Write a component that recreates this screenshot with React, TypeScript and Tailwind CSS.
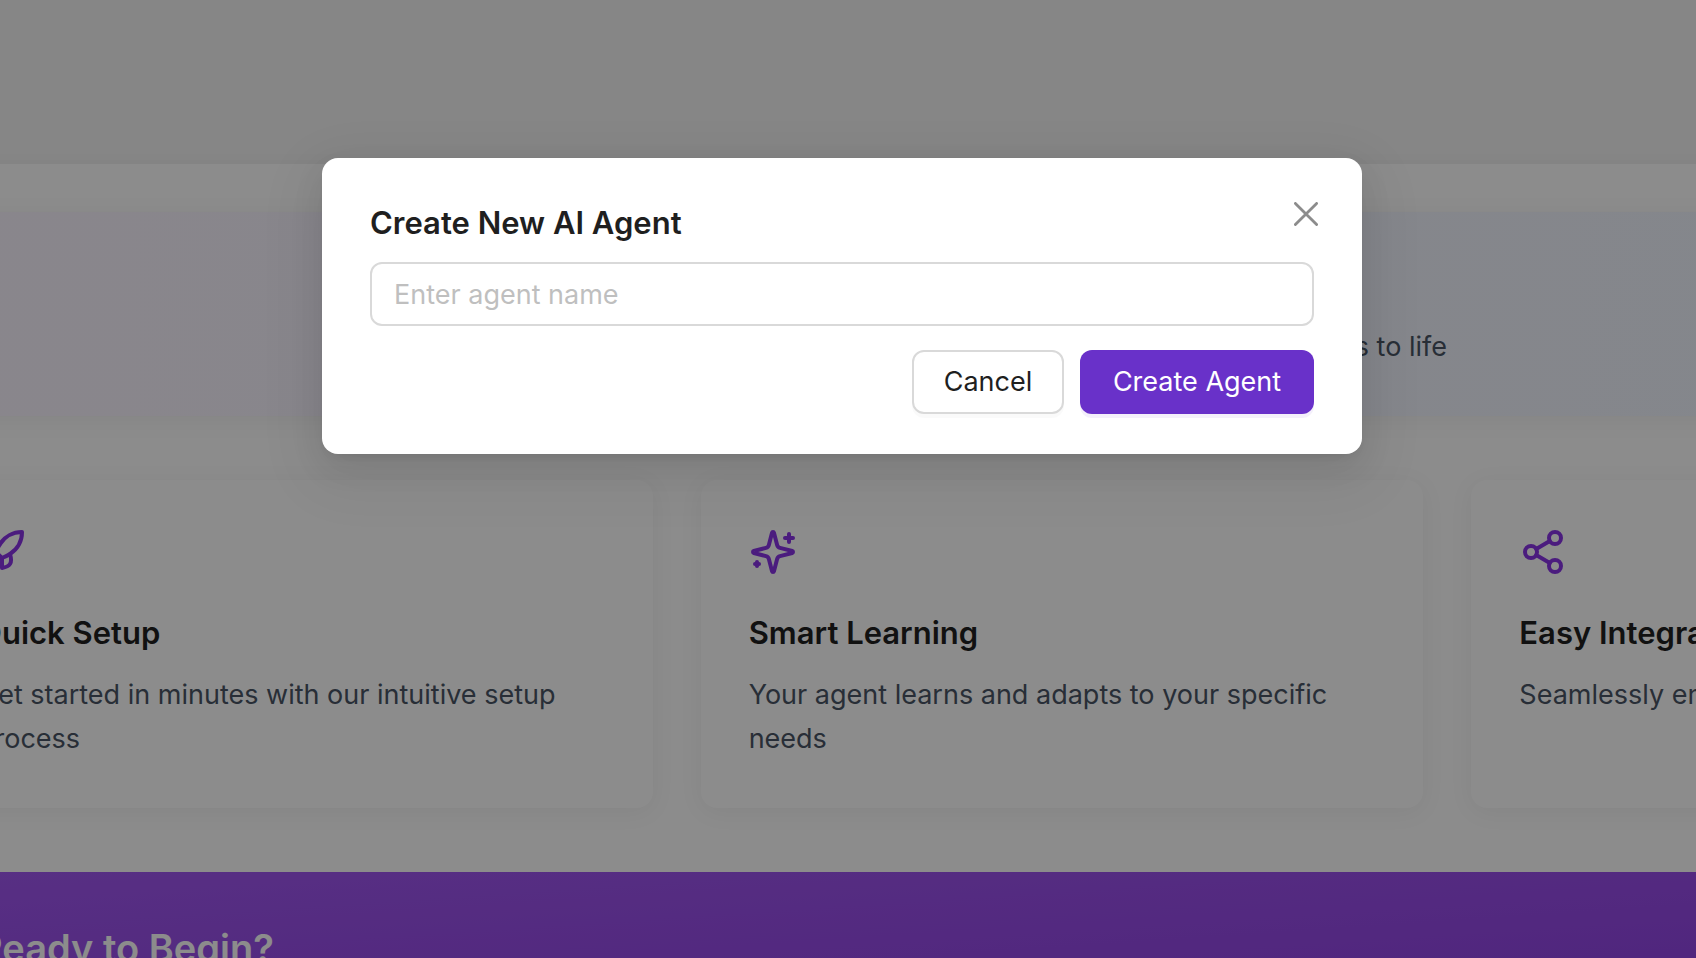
import type { ComponentType } from "react";
import { Rocket, Share2 } from "lucide-react";

type IconProps = {
  className?: string;
};

type Feature = {
  icon: ComponentType<IconProps>;
  title: string;
  text: string;
};

function SparklesIcon({ className }: IconProps) {
  return (
    <svg
      viewBox="0 0 24 24"
      className={className}
      fill="none"
      stroke="currentColor"
      strokeWidth="2"
      strokeLinecap="round"
      strokeLinejoin="round"
      aria-hidden="true"
    >
      <path d="M9.937 15.5A2 2 0 0 0 8.5 14.063l-6.135-1.582a.5.5 0 0 1 0-.962L8.5 9.936A2 2 0 0 0 9.937 8.5l1.582-6.135a.5.5 0 0 1 .963 0L14.063 8.5A2 2 0 0 0 15.5 9.937l6.135 1.581a.5.5 0 0 1 0 .964L15.5 14.063a2 2 0 0 0-1.437 1.437l-1.582 6.135a.5.5 0 0 1-.963 0z" />
      <path d="M20 3v4" />
      <path d="M22 5h-4" />
      <path d="M4 17v2" />
      <path d="M5 18H3" />
    </svg>
  );
}

const features: Feature[] = [
  {
    icon: Rocket,
    title: "Quick Setup",
    text: "Get started in minutes with our intuitive setup process",
  },
  {
    icon: SparklesIcon,
    title: "Smart Learning",
    text: "Your agent learns and adapts to your specific needs",
  },
  {
    icon: Share2,
    title: "Easy Integration",
    text: "Seamlessly embed",
  },
];

function FeatureCard({ icon: Icon, title, text }: Feature) {
  return (
    <article className="rounded-2xl bg-white px-12 pt-12 pb-[47px] shadow-[0_4px_24px_rgba(0,0,0,0.06)]">
      <Icon className="size-12 text-[#8934e6]" />
      <h3 className="mt-8 text-[31px] leading-[50px] font-semibold text-[#1f1f1f]">{title}</h3>
      <p className="mt-[15px] text-[27px] leading-11 text-gray-600">{text}</p>
    </article>
  );
}

function Page() {
  return (
    <div className="min-h-screen bg-[#f5f5f5]">
      <header className="h-41" />
      <main className="-mr-[498px] -ml-[70px] bg-white pt-12 shadow-[0_4px_24px_rgba(0,0,0,0.06)]">
        <section className="flex justify-end rounded-2xl bg-linear-to-r from-purple-50 to-blue-50 pt-[113px] pr-[747px] pb-[47px] shadow-[0_4px_24px_rgba(0,0,0,0.06)]">
          <p className="text-[27px] leading-11 text-gray-600">s to life</p>
        </section>
        <section className="mt-16 grid grid-cols-3 gap-12">
          {features.map((feature) => (
            <FeatureCard key={feature.title} {...feature} />
          ))}
        </section>
        <section className="mt-16 rounded-2xl bg-linear-to-br from-[#a057f0] to-[#8c3ce0] p-12">
          <h2 className="text-[38px] leading-14 font-semibold text-white">Ready to Begin?</h2>
        </section>
      </main>
    </div>
  );
}

function CreateAgentDialog() {
  return (
    <div
      role="dialog"
      aria-modal="true"
      aria-labelledby="dialog-title"
      className="relative mr-3 w-full max-w-[1040px] rounded-2xl bg-white px-12 py-10 shadow-[0_12px_32px_rgba(0,0,0,0.08),0_6px_12px_-8px_rgba(0,0,0,0.12),0_18px_56px_16px_rgba(0,0,0,0.05)]"
    >
      <button
        type="button"
        aria-label="Close"
        className="absolute top-6 right-6 flex size-16 items-center justify-center text-[#8c8c8c]"
      >
        <svg viewBox="0 0 24 24" className="size-6" fill="none" stroke="currentColor" strokeWidth="2.8" strokeLinecap="round">
          <path d="M1.4 1.4 22.6 22.6M22.6 1.4 1.4 22.6" />
        </svg>
      </button>
      <h2 id="dialog-title" className="text-[31px] leading-[50px] font-semibold text-[#1f1f1f]">
        Create New AI Agent
      </h2>
      <form onSubmit={(event) => event.preventDefault()}>
        <input
          type="text"
          aria-label="Agent name"
          placeholder="Enter agent name"
          className="mt-[14px] block h-16 w-full rounded-xl border-2 border-[#d9d9d9] bg-white px-[22px] text-[27px] text-[#1f1f1f] outline-none placeholder:text-[#bfbfbf]"
        />
        <div className="mt-6 flex justify-end gap-4 text-[27px]">
          <button
            type="button"
            className="h-16 w-[152px] rounded-xl border-2 border-[#d9d9d9] bg-white text-[#1f1f1f] shadow-[0_4px_0_rgba(0,0,0,0.02)]"
          >
            Cancel
          </button>
          <button
            type="submit"
            className="h-16 w-[234px] rounded-xl bg-[#6931c9] text-white shadow-[0_4px_0_rgba(105,49,201,0.07)]"
          >
            Create Agent
          </button>
        </div>
      </form>
    </div>
  );
}

export default function App() {
  return (
    <div className="relative h-screen overflow-hidden font-['Inter',sans-serif]">
      <Page />
      <div className="absolute inset-0 flex items-start justify-center bg-black/45 pt-[158px]">
        <CreateAgentDialog />
      </div>
    </div>
  );
}
